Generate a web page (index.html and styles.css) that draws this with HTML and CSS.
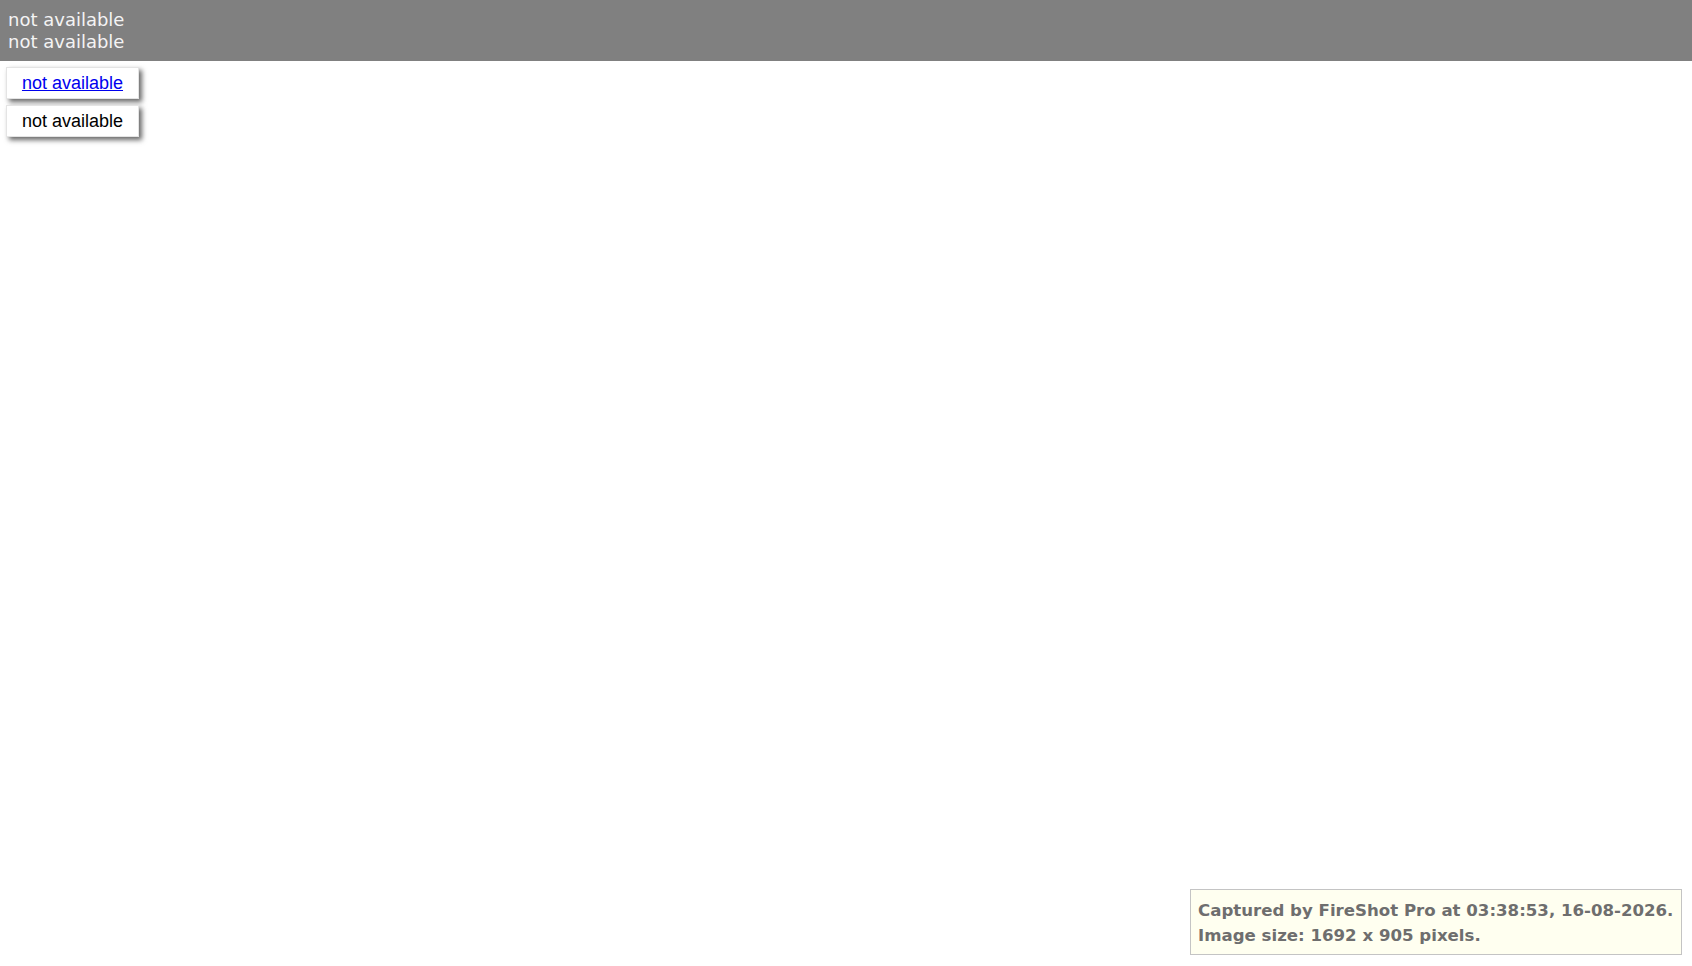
FILE: index.html
```html
<!DOCTYPE html>
<html>
<head>
<meta charset="utf-8">
<link rel="stylesheet" href="styles.css">
</head>
<body>
<header class="topbar">
  <div class="topbar-line">not available</div>
  <div class="topbar-line">not available</div>
</header>
<main class="panel">
  <div class="tile"><a href="#" class="tile-link">not available</a></div>
  <div class="tile">not available</div>
</main>
<aside class="capture-note">
  <div>Captured by FireShot Pro at 03:38:53, 16-08-2026.</div>
  <div>Image size: 1692 x 905 pixels.</div>
</aside>
</body>
</html>
```
FILE: styles.css
```css
html, body {
  margin: 0;
  padding: 0;
  height: 100%;
  background: #ffffff;
}

.topbar {
  background: #808080;
  color: #f4f4f4;
  font-family: "DejaVu Sans", Verdana, sans-serif;
  font-size: 18px;
  line-height: 22px;
  height: 61px;
  box-sizing: border-box;
  padding: 9px 8px 0;
}

.panel {
  display: flex;
  flex-direction: column;
  align-items: flex-start;
  gap: 6px;
  padding: 6px 6px;
}

.tile {
  width: 133px;
  height: 32px;
  box-sizing: border-box;
  background: #ffffff;
  border: 1px solid #e4e4e4;
  box-shadow: 3px 3px 5px rgba(0, 0, 0, 0.6);
  font-family: "Liberation Sans", Arial, sans-serif;
  font-size: 18px;
  color: #000;
  display: flex;
  align-items: center;
  justify-content: center;
}

.tile-link {
  color: #0000ee;
  text-decoration: underline;
}

.capture-note {
  position: fixed;
  left: 1190px;
  top: 889px;
  width: 492px;
  height: 66px;
  box-sizing: border-box;
  background: #fffff0;
  border: 1px solid #c4c4c4;
  color: #6e6e6e;
  font-family: "DejaVu Sans", sans-serif;
  font-weight: bold;
  font-size: 16.6px;
  line-height: 25px;
  padding: 8px 7px;
  white-space: nowrap;
  overflow: hidden;
}
```
